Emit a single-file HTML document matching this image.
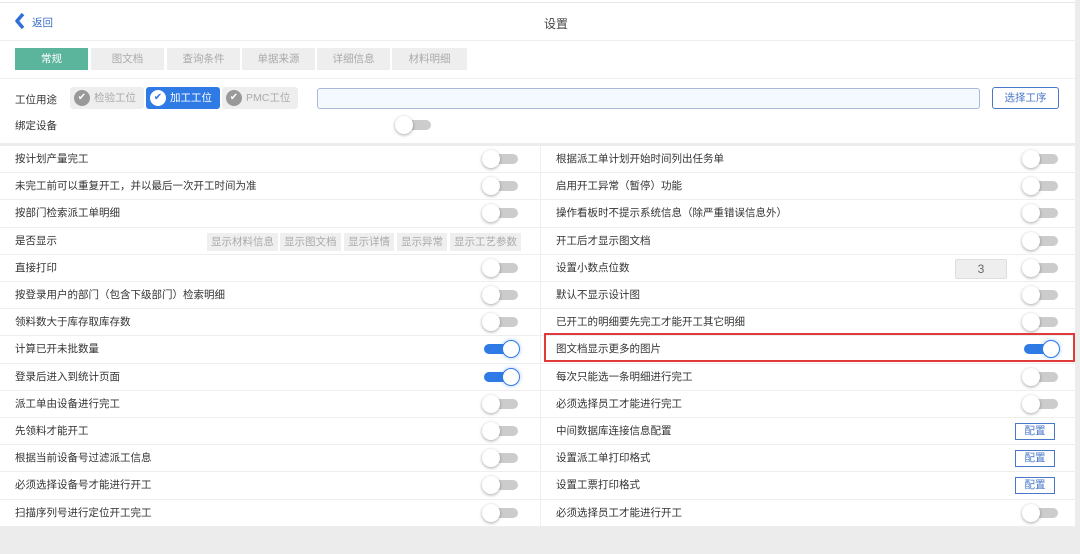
<!DOCTYPE html>
<html><head><meta charset="utf-8"><style>
*{margin:0;padding:0;box-sizing:border-box}
body{width:1080px;height:554px;background:#ececec;font-family:"Liberation Sans","Noto Sans CJK SC",sans-serif;font-size:10.5px;color:#333;position:relative;overflow:hidden}
.a{position:absolute}
.wh{background:#fff}
.tab{position:absolute;top:48px;height:22px;width:73px;background:#eeeeee;color:#aaa;text-align:center;line-height:22px}
.row{position:absolute;height:27.2px;border-bottom:1px solid #eee;line-height:26px;padding-left:15px;background:#fff}
.tg{position:absolute;width:38px;height:18px}
.tg .t{position:absolute;left:2px;top:4px;width:34px;height:10px;border-radius:5px;background:#ccc}
.tg .k{position:absolute;left:0;top:0;width:18px;height:18px;border-radius:50%;background:#fff;box-shadow:0 1px 3px rgba(0,0,0,.35)}
.tg.on .t{background:#2f7ae5}
.tg.on .k{left:20px;border:1px solid #2f7ae5;box-shadow:0 0 4px rgba(47,122,229,.4)}
.gb{position:absolute;top:5px;height:18px;background:#efefef;color:#aaa;line-height:18px;padding:0 4px;font-size:10.5px}
.cfg{position:absolute;right:20px;top:5px;width:40px;height:17px;border:1px solid #4a78c8;color:#4a78c8;text-align:center;line-height:15px;font-size:10.5px;background:#fff}
.chip{position:absolute;top:87px;height:22px;line-height:22px;border-radius:3px;padding-left:24px;padding-right:5px;background:#eee;color:#aaa}
.chip .c{position:absolute;left:4px;top:3px;width:16px;height:16px;border-radius:50%;background:#999;color:#fff;font-size:10px;line-height:16px;text-align:center}
</style></head><body>
<div class="a wh" style="left:0;top:0;width:1075px;height:143px"></div>
<div class="a" style="left:0;top:2px;width:1075px;height:1px;background:#e6e6e6"></div>
<div class="a" style="left:0;top:40px;width:1075px;height:1px;background:#eee"></div>
<div class="a" style="left:0;top:78px;width:1075px;height:1px;background:#f2f2f2"></div>
<svg class="a" style="left:13px;top:12px" width="14" height="18"><path d="M10 2 L4 9 L10 16" stroke="#2f6fd6" stroke-width="3.5" fill="none" stroke-linejoin="round"/></svg>
<div class="a" style="left:32px;top:15px;color:#3a6fc8;font-size:10.5px">返回</div>
<div class="a" style="left:544px;top:15px;font-size:12px;color:#444">设置</div>
<div class="tab" style="left:15px;background:#5bb59d;color:#fff">常规</div>
<div class="tab" style="left:91px">图文档</div>
<div class="tab" style="left:167px">查询条件</div>
<div class="tab" style="left:242px">单据来源</div>
<div class="tab" style="left:317px">详细信息</div>
<div class="tab" style="left:392px;width:75px">材料明细</div>
<div class="a" style="left:15px;top:92px">工位用途</div>
<div class="chip" style="left:70px;width:74px"><span class="c">✔</span>检验工位</div>
<div class="chip" style="left:146px;width:74px;background:#2f7ae5;color:#fff"><span class="c" style="background:#fff;color:#2f7ae5">✔</span>加工工位</div>
<div class="chip" style="left:222px;width:76px"><span class="c">✔</span>PMC工位</div>
<div class="a" style="left:317px;top:88px;width:663px;height:21px;border:1px solid #a9b9d9;border-radius:3px;background:#f3f9ff"></div>
<div class="a" style="left:992px;top:87px;width:67px;height:22px;border:1px solid #4a78c8;border-radius:3px;color:#4a78c8;text-align:center;line-height:20px">选择工序</div>
<div class="a" style="left:15px;top:118px">绑定设备</div>
<div class="tg" style="left:395px;top:116px"><div class="t"></div><div class="k"></div></div>

<div id="rows"></div>
<div class="a" style="left:540px;top:146px;width:1px;height:381px;background:#eee"></div>
<div class="a" style="left:544px;top:333px;width:531px;height:29px;border:2px solid #e03a3a"></div>
<script>
var L=[["按计划产量完工",0],["未完工前可以重复开工，并以最后一次开工时间为准",0],["按部门检索派工单明细",0],["是否显示","s"],["直接打印",0],["按登录用户的部门（包含下级部门）检索明细",0],["领料数大于库存取库存数",0],["计算已开未批数量",1],["登录后进入到统计页面",1],["派工单由设备进行完工",0],["先领料才能开工",0],["根据当前设备号过滤派工信息",0],["必须选择设备号才能进行开工",0],["扫描序列号进行定位开工完工",0]];
var R=[["根据派工单计划开始时间列出任务单",0],["启用开工异常（暂停）功能",0],["操作看板时不提示系统信息（除严重错误信息外）",0],["开工后才显示图文档",0],["设置小数点位数","n"],["默认不显示设计图",0],["已开工的明细要先完工才能开工其它明细",0],["图文档显示更多的图片",1],["每次只能选一条明细进行完工",0],["必须选择员工才能进行完工",0],["中间数据库连接信息配置","c"],["设置派工单打印格式","c"],["设置工票打印格式","c"],["必须选择员工才能进行开工",0]];
var h="";
function tg(x,on){return '<div class="tg'+(on?' on':'')+'" style="left:'+x+'px;top:4px"><div class="t"></div><div class="k"></div></div>';}
for(var i=0;i<14;i++){var y=146+i*27.2;
var l=L[i],r=R[i];
h+='<div class="row" style="left:0;top:'+y+'px;width:540px">'+l[0];
if(l[1]==="s"){var b=[["显示材料信息",207],["显示图文档",280],["显示详情",344],["显示异常",397],["显示工艺参数",450]];b.forEach(function(q){h+='<div class="gb" style="left:'+q[1]+'px">'+q[0]+'</div>';});}
else h+=tg(482,l[1]);
h+='</div>';
h+='<div class="row" style="left:541px;top:'+y+'px;width:534px">'+r[0];
if(r[1]==="c")h+='<div class="cfg">配置</div>';
else if(r[1]==="n"){h+='<div class="a" style="left:414px;top:4px;width:52px;height:20px;background:#eee;border:1px solid #ddd;border-radius:2px;text-align:center;line-height:18px;color:#666;font-size:12px">3</div>'+tg(481,0);}
else h+=tg(481,r[1]);
h+='</div>';}
document.getElementById("rows").innerHTML=h;
</script>
</body></html>
